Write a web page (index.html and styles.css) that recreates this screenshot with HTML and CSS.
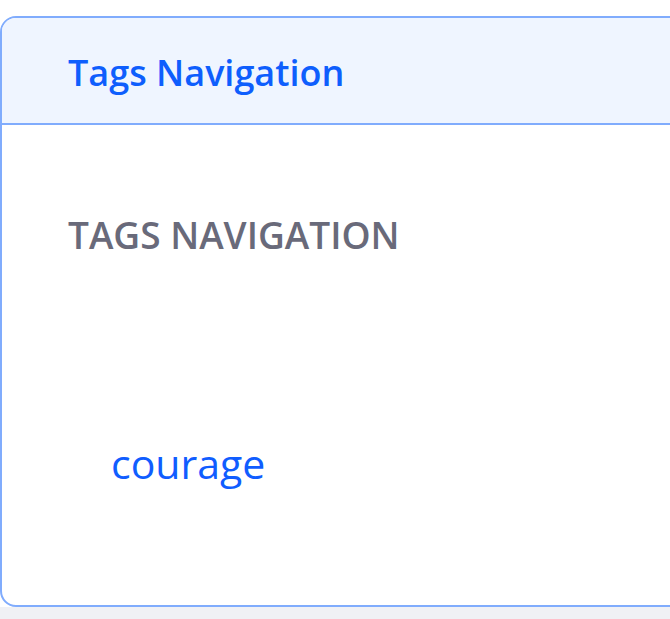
FILE: index.html
```html
<!DOCTYPE html>
<html lang="en">
<head>
<meta charset="utf-8">
<title>Tags Navigation</title>
<link rel="stylesheet" href="styles.css">
</head>
<body>
<div class="page">
  <section class="card">
    <header class="card-header">
      <h1 class="card-title">Tags Navigation</h1>
    </header>
    <div class="card-body">
      <h2 class="section-title">TAGS NAVIGATION</h2>
      <ul class="tag-list">
        <li><a class="tag-link" href="#">courage</a></li>
      </ul>
    </div>
  </section>
  <div class="footer-strip"></div>
</div>
</body>
</html>
```
FILE: styles.css
```css
html, body {
  margin: 0;
  padding: 0;
  background: #ffffff;
  overflow: hidden;
}

.page {
  width: 670px;
  height: 619px;
  overflow: hidden;
  padding-top: 16px;
  box-sizing: border-box;
  display: flex;
  flex-direction: column;
  font-family: "Open Sans", "Noto Sans", sans-serif;
}

.card {
  width: 720px;
  flex: none;
  border: 2px solid #80acfd;
  border-radius: 16px;
  background: #ffffff;
  overflow: hidden;
}

.card-header {
  height: 107px;
  box-sizing: border-box;
  background: #eff5ff;
  border-bottom: 2px solid #80acfd;
  display: flex;
  align-items: center;
  padding: 5px 66px 0;
}

.card-title {
  margin: 0;
  font-size: 36px;
  font-weight: 600;
  color: #0e5efd;
  line-height: 1.2;
}

.card-body {
  height: 480px;
  box-sizing: border-box;
  padding: 88px 66px 0;
}

.section-title {
  margin: 0;
  font-size: 37px;
  font-weight: 600;
  color: #696a7a;
  line-height: 44px;
}

.tag-list {
  list-style: none;
  margin: 184px 0 0;
  padding: 0 0 0 43px;
}

.tag-link {
  font-size: 41px;
  line-height: 44px;
  color: #105dff;
  text-decoration: none;
}

.footer-strip {
  flex: 1;
  background: #f0f1f5;
}
```
